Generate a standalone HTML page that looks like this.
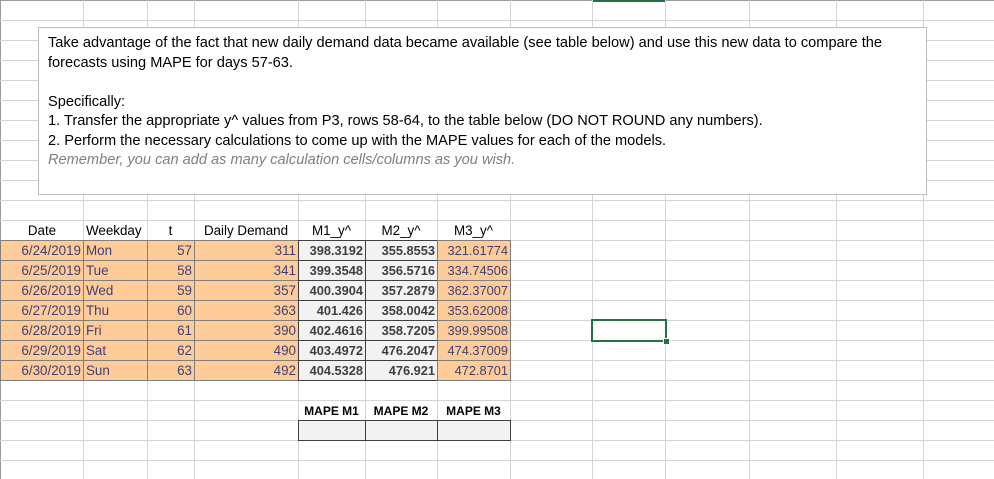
<!DOCTYPE html>
<html><head><meta charset="utf-8"><style>
body{margin:0;width:994px;height:479px;overflow:hidden;background:#fff;position:relative;font-family:"Liberation Sans",sans-serif;}
.v{position:absolute;top:0;height:479px;width:1px;background:#d4d4d4}
.h{position:absolute;left:0;width:994px;height:1px;background:#d4d4d4}
.c{position:absolute;height:20px;line-height:20px;font-size:13.4px;box-sizing:border-box;white-space:nowrap;overflow:hidden;padding:0 2px}
.in{background:#ffcc99;color:#3f3f76;border:1px solid #7f7f7f}
.out{background:#f2f2f2;color:#3f3f3f;border:1px solid #3f3f3f;font-weight:bold}
.r{text-align:right}.l{text-align:left}.m{text-align:center}
#box{position:absolute;left:38px;top:27px;width:889px;height:168px;border:1px solid #bdbdbd;background:#fff;box-sizing:border-box;padding:6px 0 0 9px;font-size:14.6px;line-height:19.5px;color:#000}
</style></head><body>
<div style="position:absolute;left:0;top:0;width:1px;height:479px;background:#9b9b9b"></div>
<div style="position:absolute;left:0;top:0;width:994px;height:1px;background:#9b9b9b"></div>
<div style="position:absolute;left:592px;top:0;width:74px;height:2px;background:#217346"></div>
<div class="v" style="left:83px"></div><div class="v" style="left:147px"></div><div class="v" style="left:194px"></div><div class="v" style="left:298px"></div><div class="v" style="left:365px"></div><div class="v" style="left:437px"></div><div class="v" style="left:510px"></div><div class="v" style="left:592px"></div><div class="v" style="left:665px"></div><div class="v" style="left:749px"></div><div class="v" style="left:836px"></div><div class="v" style="left:923px"></div>
<div class="h" style="top:20px"></div><div class="h" style="top:40px"></div><div class="h" style="top:60px"></div><div class="h" style="top:80px"></div><div class="h" style="top:100px"></div><div class="h" style="top:120px"></div><div class="h" style="top:140px"></div><div class="h" style="top:160px"></div><div class="h" style="top:180px"></div><div class="h" style="top:200px"></div><div class="h" style="top:220px"></div><div class="h" style="top:240px"></div><div class="h" style="top:260px"></div><div class="h" style="top:280px"></div><div class="h" style="top:300px"></div><div class="h" style="top:320px"></div><div class="h" style="top:340px"></div><div class="h" style="top:360px"></div><div class="h" style="top:380px"></div><div class="h" style="top:400px"></div><div class="h" style="top:420px"></div><div class="h" style="top:440px"></div><div class="h" style="top:460px"></div>

<div id="box">Take advantage of the fact that new daily demand data became available (see table below) and use this new data to compare the<br>forecasts using MAPE for days 57-63.<br><br>Specifically:<br>1. Transfer the appropriate y^ values from P3, rows 58-64, to the table below (DO NOT ROUND any numbers).<br>2. Perform the necessary calculations to come up with the MAPE values for each of the models.<br><i style="color:#808080">Remember, you can add as many calculation cells/columns as you wish.</i></div>

<div class="c m" style="left:1px;top:221px;width:82px">Date</div>
<div class="c l" style="left:84px;top:221px;width:63px">Weekday</div>
<div class="c m" style="left:147px;top:221px;width:47px">t</div>
<div class="c m" style="left:194px;top:221px;width:104px">Daily Demand</div>
<div class="c m" style="left:298px;top:221px;width:67px">M1_y^</div>
<div class="c m" style="left:365px;top:221px;width:72px">M2_y^</div>
<div class="c m" style="left:437px;top:221px;width:73px">M3_y^</div>

<div id="rows"></div>
<script>
var d=[["6/24/2019","Mon",57,311,"398.3192","355.8553","321.61774"],["6/25/2019","Tue",58,341,"399.3548","356.5716","334.74506"],["6/26/2019","Wed",59,357,"400.3904","357.2879","362.37007"],["6/27/2019","Thu",60,363,"401.426","358.0042","353.62008"],["6/28/2019","Fri",61,390,"402.4616","358.7205","399.99508"],["6/29/2019","Sat",62,490,"403.4972","476.2047","474.37009"],["6/30/2019","Sun",63,492,"404.5328","476.921","472.8701"]];
var h="";
d.forEach(function(r,i){var t=240+i*20;
h+='<div class="c in r" style="left:0;top:'+t+'px;width:84px;height:21px">'+r[0]+'</div>';
h+='<div class="c in l" style="left:83px;top:'+t+'px;width:65px;height:21px">'+r[1]+'</div>';
h+='<div class="c in r" style="left:147px;top:'+t+'px;width:48px;height:21px">'+r[2]+'</div>';
h+='<div class="c in r" style="left:194px;top:'+t+'px;width:105px;height:21px">'+r[3]+'</div>';
h+='<div class="c out r" style="left:298px;top:'+t+'px;width:68px;height:21px;font-size:12.8px">'+r[4]+'</div>';
h+='<div class="c out r" style="left:365px;top:'+t+'px;width:73px;height:21px;font-size:12.8px">'+r[5]+'</div>';
h+='<div class="c in r" style="left:437px;top:'+t+'px;width:74px;height:21px;font-size:12.8px">'+r[6]+'</div>';});
document.getElementById("rows").innerHTML=h;
</script>
<div class="c m" style="left:298px;top:401px;width:67px;font-weight:bold;font-size:12px">MAPE M1</div>
<div class="c m" style="left:365px;top:401px;width:72px;font-weight:bold;font-size:12px">MAPE M2</div>
<div class="c m" style="left:437px;top:401px;width:73px;font-weight:bold;font-size:12px">MAPE M3</div>
<div class="c" style="left:298px;top:420px;width:68px;height:21px;background:#f2f2f2;border:1px solid #3f3f3f"></div>
<div class="c" style="left:365px;top:420px;width:73px;height:21px;background:#f2f2f2;border:1px solid #3f3f3f"></div>
<div class="c" style="left:437px;top:420px;width:74px;height:21px;background:#f2f2f2;border:1px solid #3f3f3f"></div>

<div style="position:absolute;left:591px;top:319px;width:76px;height:23px;border:2px solid #217346;box-sizing:border-box"></div>
<div style="position:absolute;left:663px;top:338px;width:5px;height:5px;background:#217346;border:1px solid #fff"></div>
</body></html>
